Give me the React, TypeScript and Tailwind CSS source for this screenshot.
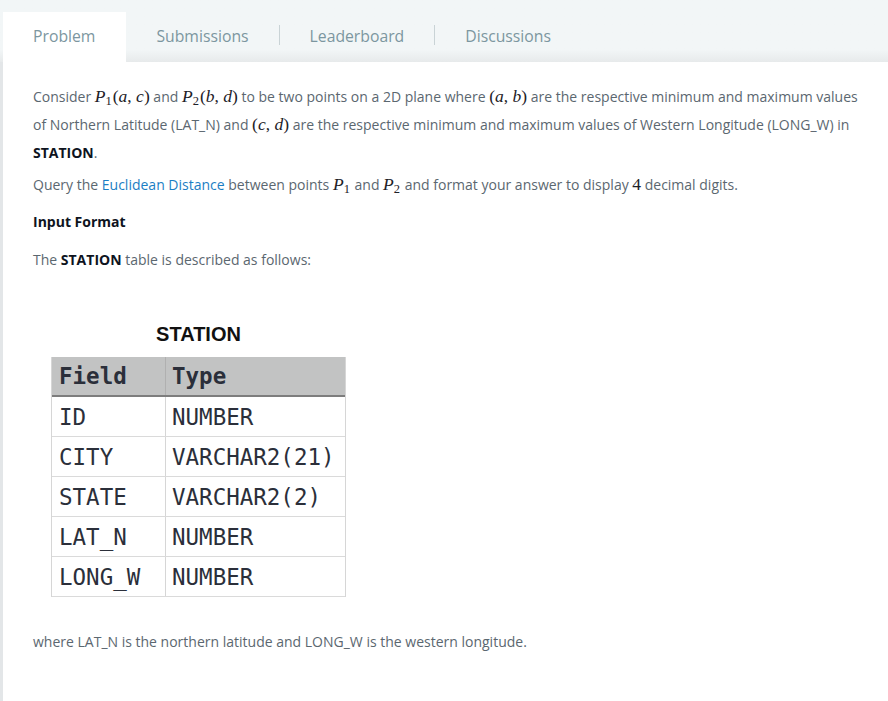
import React from "react";

const tabs = ["Problem", "Submissions", "Leaderboard", "Discussions"];

const rows: [string, string][] = [
  ["ID", "NUMBER"],
  ["CITY", "VARCHAR2(21)"],
  ["STATE", "VARCHAR2(2)"],
  ["LAT_N", "NUMBER"],
  ["LONG_W", "NUMBER"],
];

const M = ({ children }: { children: React.ReactNode }) => (
  <span className="font-['Liberation_Serif',serif] text-[17.5px] leading-[20px] text-[#1d2127]">{children}</span>
);
const I = ({ children }: { children: React.ReactNode }) => <i>{children}</i>;
const Sub = ({ children }: { children: React.ReactNode }) => (
  <span className="inline-block text-[12.5px] leading-[12px] translate-y-[3px] mr-[1px]">{children}</span>
);

export default function App() {
  return (
    <div className="w-[888px] h-[701px] bg-white font-['Open_Sans',sans-serif] overflow-hidden">
      {/* tab strip */}
      <div className="h-[62px] flex items-end bg-linear-to-b from-[#f2f6f7] from-80% to-[#e7eaeb] pl-[3px]">
        {tabs.map((t, i) => (
          <div key={t} className="flex items-center">
            {i > 1 && <div className="w-px h-[20px] bg-[#c9d3d6] mb-[4px]" />}
            <div
              className={
                "h-[50px] px-[30px] flex items-center text-[15.75px] text-[#7c96a0] " +
                (i === 0 ? "bg-white pr-[31px]" : "")
              }
            >
              {t}
            </div>
          </div>
        ))}
      </div>

      <div className="border-l-[3px] border-[#e3e6e8] h-[639px] pl-[30px] pr-[20px] pt-[21px] text-[14px] leading-[28px] text-[#5b6770]">
        <p>
          Consider{" "}
          <M>
            <I>P</I>
            <Sub>1</Sub>(<I>a</I>, <I>c</I>)
          </M>{" "}
          and{" "}
          <M>
            <I>P</I>
            <Sub>2</Sub>(<I>b</I>, <I>d</I>)
          </M>{" "}
          to be two points on a 2D plane where{" "}
          <M>
            (<I>a</I>, <I>b</I>)
          </M>{" "}
          are the respective minimum and maximum values of Northern Latitude (LAT_N) and{" "}
          <M>
            (<I>c</I>, <I>d</I>)
          </M>{" "}
          are the respective minimum and maximum values of Western Longitude (LONG_W) in{" "}
          <b className="text-[#0e141e]">STATION</b>.
        </p>
        <p className="mt-[4px]">
          Query the <span className="text-[#1b7ec4]">Euclidean Distance</span> between points{" "}
          <M>
            <I>P</I>
            <Sub>1</Sub>
          </M>{" "}
          and{" "}
          <M>
            <I>P</I>
            <Sub>2</Sub>
          </M>{" "}
          and format your answer to display <M>4</M> decimal digits.
        </p>
        <p className="mt-[9px] font-bold text-[#0e141e]">Input Format</p>
        <p className="mt-[10px]">
          The <b className="text-[#0e141e]">STATION</b> table is described as follows:
        </p>

        {/* table picture */}
        <div className="ml-[18px] mt-[48px] w-[295px]">
          <div className="text-center font-['Liberation_Sans',sans-serif] font-bold text-[20px] leading-[24px] text-[#111] mb-[11px]">
            STATION
          </div>
          <div className="border-l border-r border-[#d6d6d6] font-['DejaVu_Sans_Mono',monospace] text-[22.5px] text-[#2b2f3a]">
            <div className="flex h-[40px] bg-[#c2c3c3] border-b-2 border-[#7d7d7d] font-bold">
              <div className="w-[114px] pl-[7px] flex items-center border-r border-[#b0b0b0]">Field</div>
              <div className="flex-1 pl-[6px] flex items-center">Type</div>
            </div>
            {rows.map(([f, t]) => (
              <div key={f} className="flex h-[40px] border-b border-[#dadada]">
                <div className="w-[114px] pl-[7px] flex items-center border-r border-[#d6d6d6]">{f}</div>
                <div className="flex-1 pl-[6px] flex items-center">{t}</div>
              </div>
            ))}
          </div>
        </div>

        <p className="mt-[31px]">where LAT_N is the northern latitude and LONG_W is the western longitude.</p>
      </div>
    </div>
  );
}
